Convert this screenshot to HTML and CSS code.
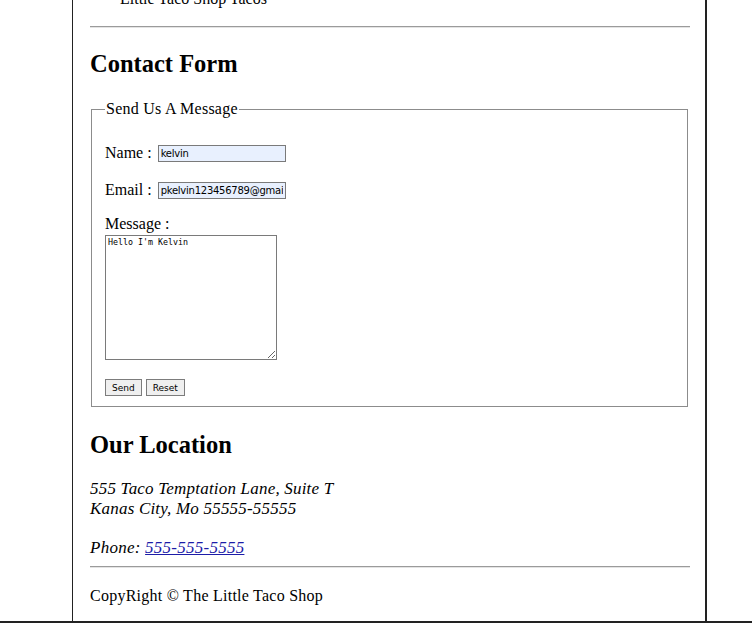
FILE: index.html
```html
<!DOCTYPE html>
<html lang="en">
<head>
<meta charset="utf-8">
<title>The Little Taco Shop - Contact</title>
<link rel="stylesheet" href="styles.css">
</head>
<body>
<div class="page">
  <ul class="menu"><li>Little Taco Shop Tacos</li></ul>
  <hr class="rule rule-top">
  <h2 class="title title-contact">Contact Form</h2>
  <form class="contact">
    <fieldset class="box">
      <legend class="box-legend">Send Us A Message</legend>
      <div class="row row-name"><label class="label" for="name">Name :</label><input class="field" id="name" type="text" value="kelvin"></div>
      <div class="row row-email"><label class="label" for="email">Email :</label><input class="field" id="email" type="text" value="pkelvin123456789@gmail.com"></div>
      <label class="label label-block" for="msg">Message :</label>
      <textarea class="message" id="msg">Hello I'm Kelvin</textarea>
      <div class="actions"><button type="button" class="btn">Send</button><button type="reset" class="btn">Reset</button></div>
    </fieldset>
  </form>
  <h2 class="title title-location">Our Location</h2>
  <address class="address">555 Taco Temptation Lane, Suite T<br>Kanas City, Mo 55555-55555</address>
  <p class="phone">Phone: <a class="phone-link" href="#">555-555-5555</a></p>
  <hr class="rule rule-bottom">
  <p class="copy">CopyRight © The Little Taco Shop</p>
</div>
<div class="floor"></div>
</body>
</html>
```
FILE: styles.css
```css
html, body {
  margin: 0;
  background: #fff;
}
body {
  font-family: "Liberation Serif", "Times New Roman", serif;
  font-size: 16px;
  color: #000;
  overflow: hidden;
  height: 623px;
  display: flex;
  flex-direction: column;
}
.page {
  flex: 1;
  flex-shrink: 0;
  margin: -10px 0 0 72px;
  width: 600px;
  padding: 0 15px 0 17px;
  border-left: 1px solid #222;
  border-right: 2px solid #222;
}
.floor {
  flex-shrink: 0;
  border-top: 2px solid #222;
}
.menu {
  margin: 0;
  padding: 0 0 0 30px;
  list-style: none;
  line-height: 18px;
}
.rule {
  border: 0;
  border-top: 1px solid #9b9b9b;
  border-bottom: 1px solid #e4e4e4;
  height: 0;
  margin: 0;
}
.rule-top { margin-top: 18px; }
.rule-bottom { margin-top: 9px; }
.title {
  font-size: 24.5px;
  line-height: 28px;
  font-weight: bold;
  margin: 0;
}
.title-contact { margin-top: 22px; }
.title-location { margin-top: 24px; }
.contact { margin: 22px 0 0; }
.box {
  margin: 0 2px 0 1px;
  padding: 0 13px 10px 13px;
  border: 1px solid #8c8c8c;
}
.box-legend {
  padding: 0 1px;
  font-size: 16px;
  line-height: 18px;
  letter-spacing: 0.25px;
}
.row {
  display: flex;
  align-items: center;
  height: 20px;
  line-height: 20px;
}
.row-name { margin-top: 25px; }
.row-email { margin-top: 17px; }
.field {
  margin: 0 0 0 6px;
  width: 128px;
  height: 17px;
  box-sizing: border-box;
  border: 1px solid #7a7a7a;
  background: #e8f0fe;
  font: 10px "DejaVu Sans", sans-serif;
  letter-spacing: -0.25px;
  padding: 0 2px;
  color: #000;
  outline: none;
}
.label-block {
  display: block;
  line-height: 20px;
  margin-top: 14px;
}
.message {
  display: block;
  margin: 1px 0 0;
  width: 172px;
  height: 125px;
  box-sizing: border-box;
  border: 1px solid #7a7a7a;
  padding: 1px 2px;
  font: 8.3px "DejaVu Sans Mono", monospace;
  color: #000;
}
.actions {
  display: flex;
  gap: 4px;
  margin-top: 19px;
}
.btn {
  height: 17px;
  padding: 0 6px;
  font: 9px "DejaVu Sans", sans-serif;
  border: 1px solid #7c7c7c;
  border-radius: 0;
  background: #efefef;
  color: #000;
}
.address {
  font-style: italic;
  font-size: 17px;
  line-height: 19.5px;
  letter-spacing: 0.2px;
  margin-top: 20px;
}
.phone {
  margin: 19.5px 0 0;
  font-style: italic;
  font-size: 17px;
  line-height: 19.5px;
  letter-spacing: 0.25px;
}
.phone-link {
  color: #1c1ca8;
}
.copy {
  margin: 18px 0 0;
  font-size: 16px;
  line-height: 19.5px;
  letter-spacing: 0.25px;
}
```
